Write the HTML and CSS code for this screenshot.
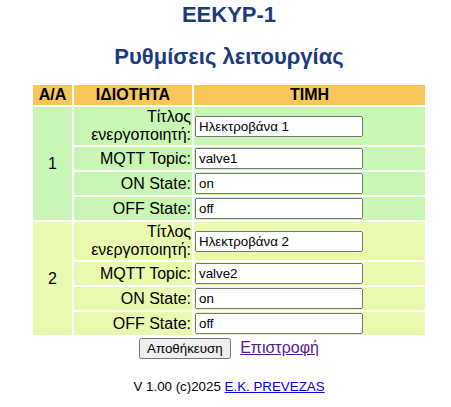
FILE: index.html
```html
<!DOCTYPE html>
<html lang="el">
<head>
<meta charset="utf-8">
<title>EEKYP-1</title>
<link rel="stylesheet" href="styles.css">
</head>
<body>
<div class="page">
  <h1 class="title">EEKYP-1</h1>
  <h2 class="subtitle">Ρυθμίσεις λειτουργίας</h2>
  <form class="settings">
    <table class="grid">
      <tr class="head">
        <th class="c-num">A/A</th>
        <th class="c-prop">ΙΔΙΟΤΗΤΑ</th>
        <th class="c-val">TIMH</th>
      </tr>
      <tr class="g1">
        <td class="num" rowspan="4">1</td>
        <td class="prop">Τίτλος ενεργοποιητή:</td>
        <td class="val"><input type="text" value="Ηλεκτροβάνα 1"></td>
      </tr>
      <tr class="g1">
        <td class="prop">MQTT Topic:</td>
        <td class="val"><input type="text" value="valve1"></td>
      </tr>
      <tr class="g1">
        <td class="prop">ON State:</td>
        <td class="val"><input type="text" value="on"></td>
      </tr>
      <tr class="g1">
        <td class="prop">OFF State:</td>
        <td class="val"><input type="text" value="off"></td>
      </tr>
      <tr class="g2">
        <td class="num" rowspan="4">2</td>
        <td class="prop">Τίτλος ενεργοποιητή:</td>
        <td class="val"><input type="text" value="Ηλεκτροβάνα 2"></td>
      </tr>
      <tr class="g2">
        <td class="prop">MQTT Topic:</td>
        <td class="val"><input type="text" value="valve2"></td>
      </tr>
      <tr class="g2">
        <td class="prop">ON State:</td>
        <td class="val"><input type="text" value="on"></td>
      </tr>
      <tr class="g2">
        <td class="prop">OFF State:</td>
        <td class="val"><input type="text" value="off"></td>
      </tr>
    </table>
    <div class="actions">
      <button type="button" class="save">Αποθήκευση</button>
      <a class="back" href="#">Επιστροφή</a>
    </div>
  </form>
  <p class="footer">V 1.00 (c)2025 <a href="#" class="credit">E.K. PREVEZAS</a></p>
</div>
</body>
</html>
```

FILE: styles.css
```css
html, body {
  margin: 0;
  padding: 0;
  background: #ffffff;
}
body {
  font-family: "Liberation Sans", Arial, sans-serif;
  font-size: 16px;
  color: #000;
}
.page {
  padding: 0 8px 0 15px;
  text-align: center;
}
.title {
  margin: 0;
  padding-top: 2px;
  font-size: 22px;
  font-weight: bold;
  color: #1b3b7d;
}
.subtitle {
  margin: 16px 0 0;
  font-size: 22px;
  font-weight: bold;
  color: #1b3b7d;
}
.settings {
  margin: 13px 0 0;
}
.grid {
  margin: 0 auto;
  width: 396px;
  border-collapse: separate;
  border-spacing: 2px;
}
.grid th, .grid td {
  padding: 1px;
}
.head th {
  background: #f7c75b;
  font-weight: bold;
}
.c-num { width: 37px; }
.c-prop { width: 116px; }
.g1 td { background: #c8f6b4; }
.g2 td { background: #eaf9b0; }
.num { text-align: center; }
.prop { text-align: right; }
.val { text-align: left; }
.val input {
  font-family: "Liberation Sans", Arial, sans-serif;
  font-size: 13.333px;
  margin: 0;
  width: 168px;
  box-sizing: border-box;
}
.actions {
  text-align: center;
  font-size: 16px;
  margin-top: 1px;
}
.save {
  font-family: "Liberation Sans", Arial, sans-serif;
  font-size: 13.333px;
  margin-right: 5px;
}
.back {
  color: #551a8b;
  font-size: 16px;
}
.footer {
  margin: 20px 0 0;
  font-size: 13.333px;
}
.credit { color: #0000ee; }
```
